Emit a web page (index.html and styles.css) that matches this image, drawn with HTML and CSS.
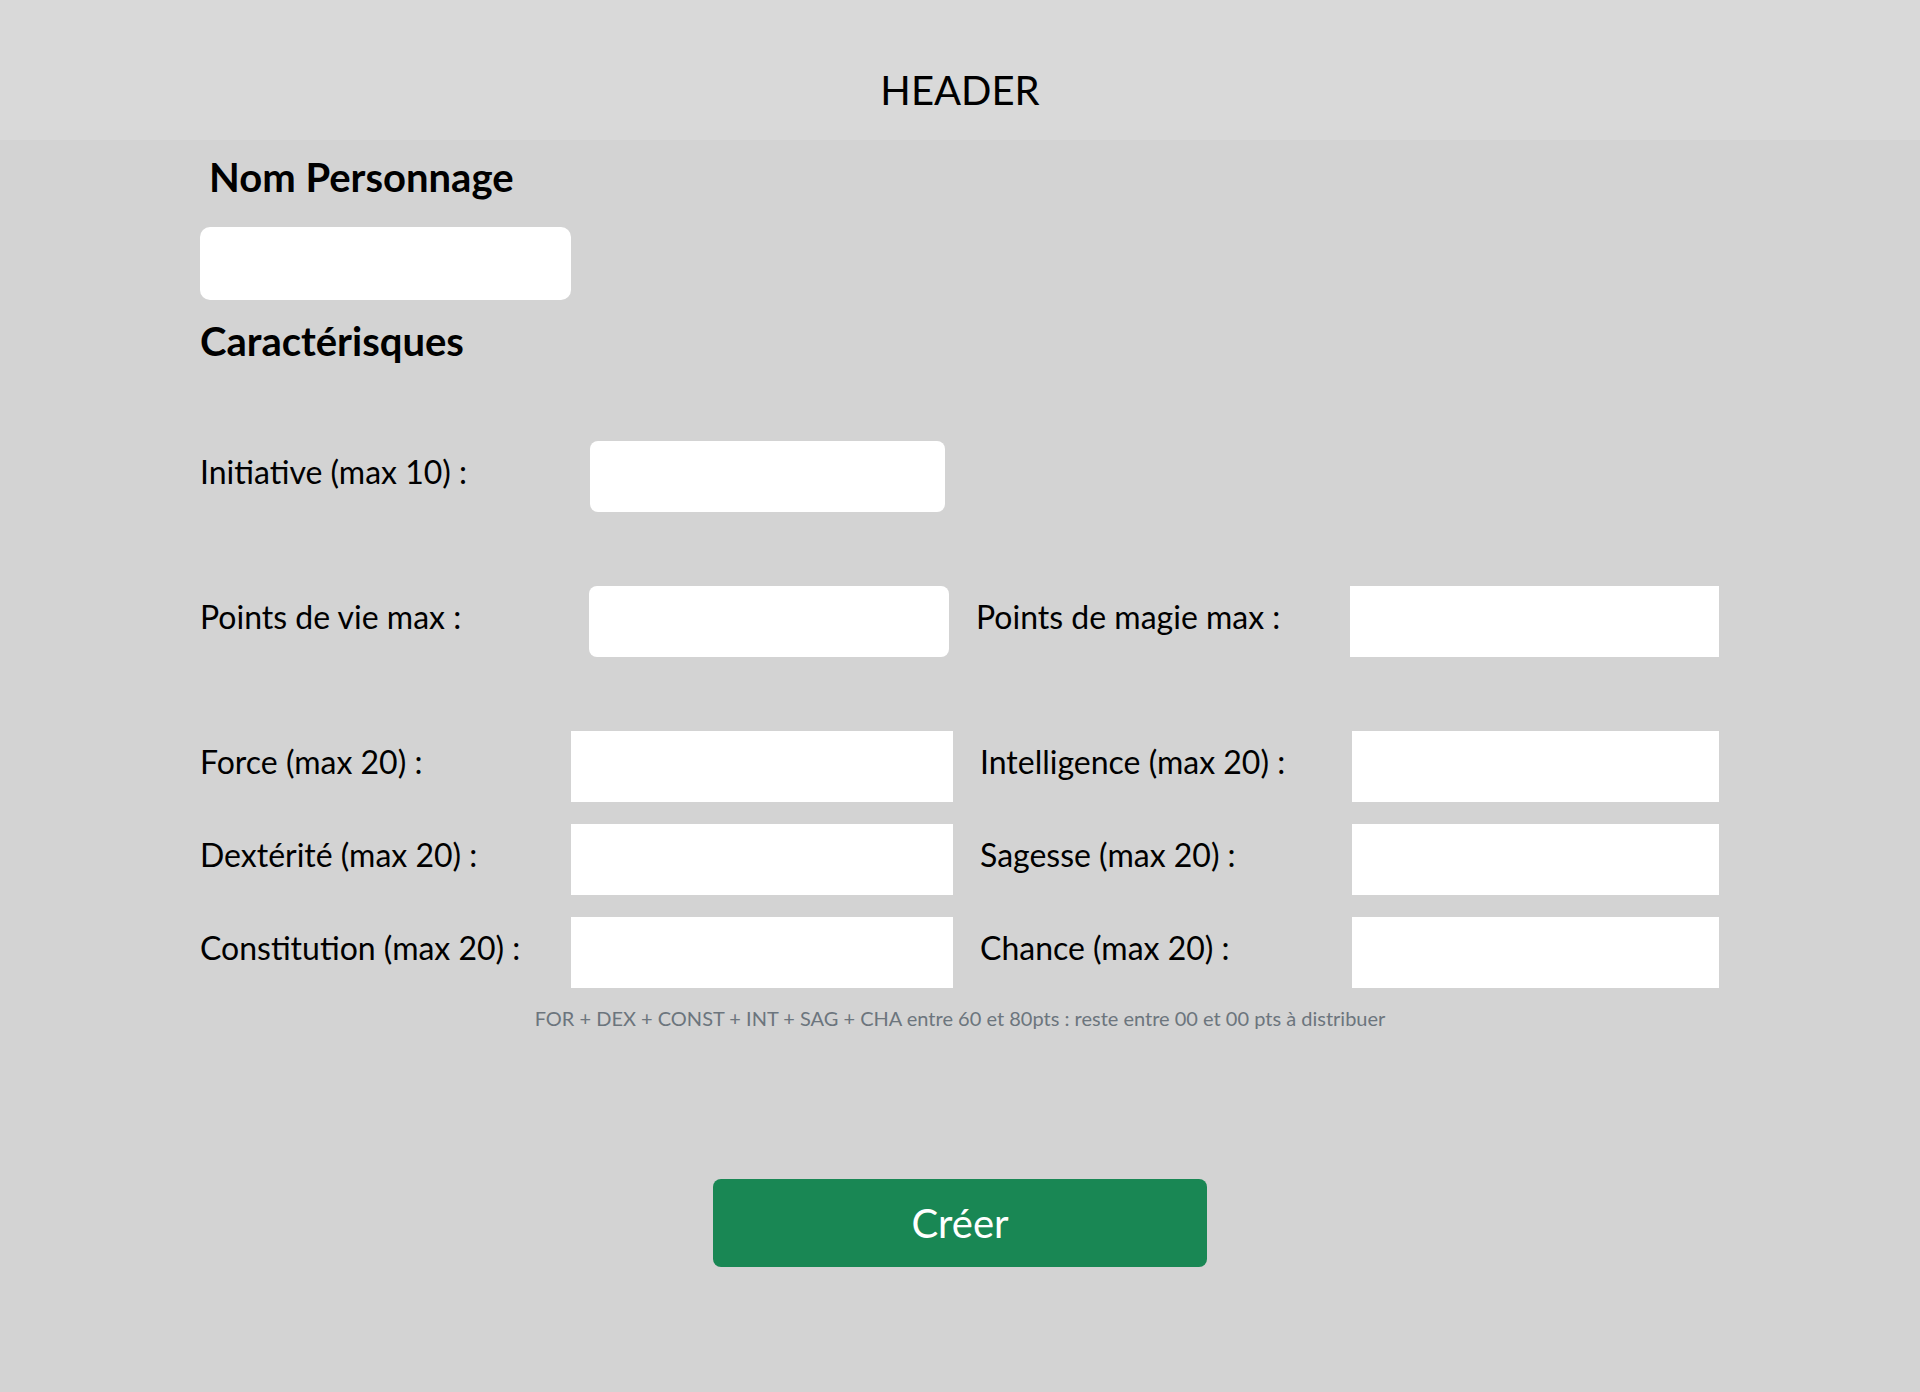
FILE: index.html
```html
<!DOCTYPE html>
<html lang="fr">
<head>
<meta charset="utf-8">
<title>Création de personnage</title>
<link rel="stylesheet" href="styles.css">
</head>
<body>
<header class="site-header">HEADER</header>
<main class="form">
  <h1 class="name-title">Nom Personnage</h1>
  <input class="field field--name" type="text">
  <h2 class="section-title">Caractérisques</h2>

  <div class="row row--init">
    <label class="lbl lbl--left">Initiative (max 10) :</label>
    <input class="field field--rounded field--init" type="text">
  </div>

  <div class="row row--pv">
    <label class="lbl lbl--pv">Points de vie max :</label>
    <input class="field field--rounded field--pv" type="text">
    <label class="lbl lbl--pm">Points de magie max :</label>
    <input class="field field--pm" type="text">
  </div>

  <div class="stats">
    <label class="lbl">Force (max 20) :</label>
    <input class="field" type="text">
    <label class="lbl lbl--right">Intelligence (max 20) :</label>
    <input class="field" type="text">

    <label class="lbl">Dextérité (max 20) :</label>
    <input class="field" type="text">
    <label class="lbl lbl--right">Sagesse (max 20) :</label>
    <input class="field" type="text">

    <label class="lbl">Constitution (max 20) :</label>
    <input class="field" type="text">
    <label class="lbl lbl--right">Chance (max 20) :</label>
    <input class="field" type="text">
  </div>

  <p class="hint">FOR + DEX + CONST + INT + SAG + CHA entre 60 et 80pts : reste entre 00 et 00 pts à distribuer</p>

  <div class="actions">
    <button class="btn-create" type="button">Créer</button>
  </div>
</main>
</body>
</html>
```

FILE: styles.css
```css
* { box-sizing: border-box; }

html, body {
  margin: 0;
  padding: 0;
}

body {
  background: #d3d3d3;
  font-family: Lato, "Open Sans", "Liberation Sans", sans-serif;
  color: #000;
  min-height: 1392px;
}

.site-header {
  height: 140px;
  background: #d9d9d9;
  text-align: center;
  font-size: 40px;
  line-height: 48px;
  padding-top: 66px;
  font-weight: 400;
}

.form {
  padding-left: 200px;
  padding-bottom: 60px;
}

.name-title {
  margin: 13px 0 0 0;
  padding-left: 9px;
  font-size: 40px;
  line-height: 48px;
  font-weight: 700;
}

.section-title {
  margin: 17px 0 0 0;
  font-size: 40px;
  line-height: 48px;
  font-weight: 700;
}

.field {
  display: block;
  border: none;
  outline: none;
  padding: 0 12px;
  margin: 0;
  background: #fff;
  height: 71px;
  font-family: inherit;
  font-size: 24px;
}

.field--name {
  width: 371px;
  height: 73px;
  margin-top: 26px;
  border-radius: 10px;
}

.field--rounded { border-radius: 8px; }

.lbl {
  display: block;
  font-size: 32px;
  line-height: 38px;
  padding-top: 12px;
  white-space: nowrap;
}

.row {
  display: flex;
  align-items: flex-start;
}

.row--init { margin-top: 76px; }
.lbl--left { width: 390px; }
.field--init { width: 355px; }

.row--pv { margin-top: 74px; }
.lbl--pv { width: 389px; }
.field--pv { width: 360px; }
.lbl--pm { width: 401px; padding-left: 27px; }
.field--pm { width: 369px; }

.stats {
  margin-top: 74px;
  display: grid;
  grid-template-columns: 371px 382px 399px 367px;
  row-gap: 22px;
  align-items: start;
}

.lbl--right { padding-left: 27px; }

.hint {
  margin: 18px 0 0 -200px;
  text-align: center;
  font-size: 20px;
  line-height: 24px;
  color: #6c757d;
}

.actions {
  margin: 149px 0 0 -200px;
  display: flex;
  justify-content: center;
}

.btn-create {
  width: 494px;
  height: 88px;
  border: none;
  border-radius: 8px;
  background: #198754;
  color: #fff;
  font-family: inherit;
  font-size: 40px;
  line-height: 48px;
  padding: 0;
  cursor: pointer;
}
```
